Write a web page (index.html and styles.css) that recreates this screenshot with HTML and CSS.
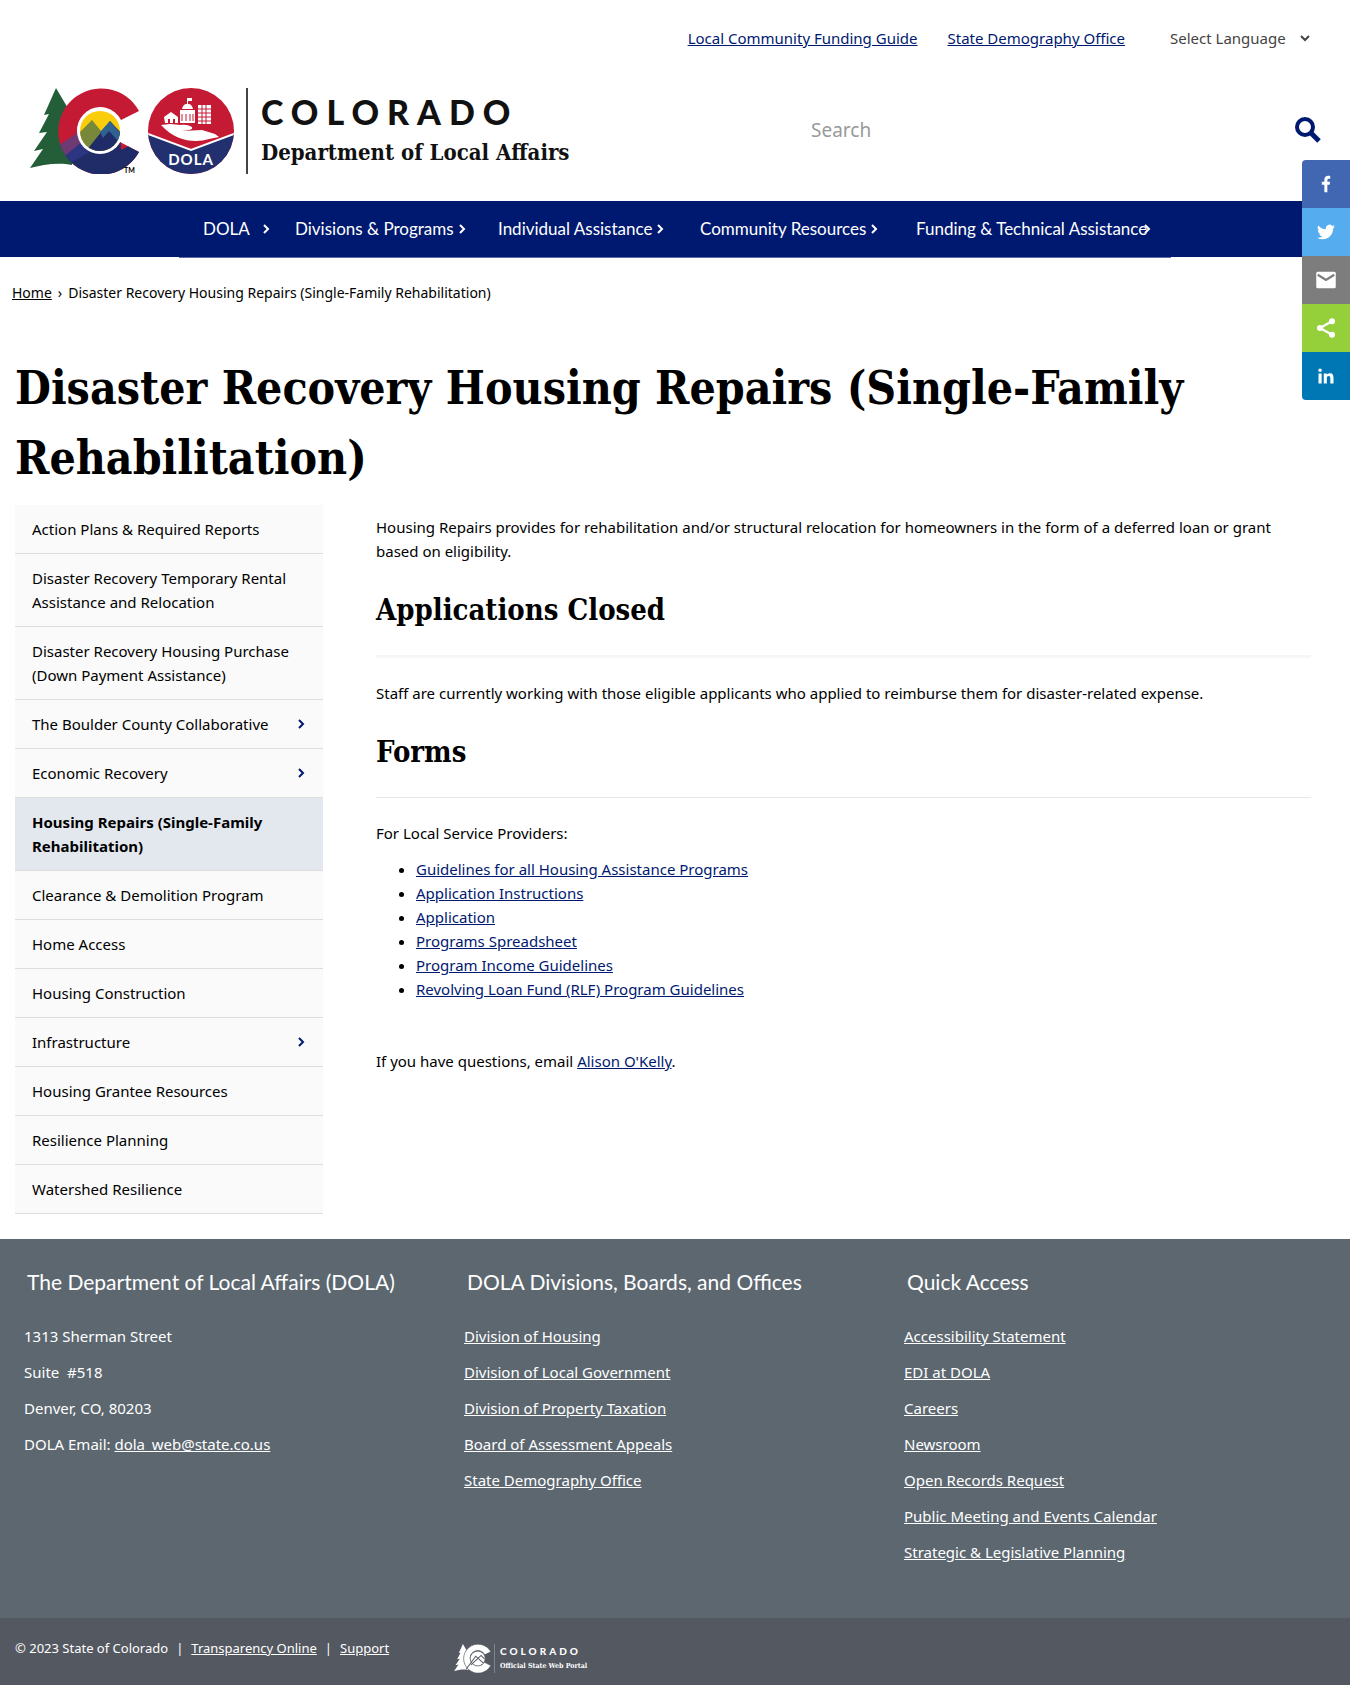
FILE: index.html
```html
<!DOCTYPE html>
<html lang="en">
<head>
<meta charset="utf-8">
<meta name="viewport" content="width=device-width, initial-scale=1">
<title>Disaster Recovery Housing Repairs (Single-Family Rehabilitation)</title>
<link rel="stylesheet" href="styles.css">
</head>
<body>
<svg class="sprite" aria-hidden="true">
  <symbol id="chevron" viewBox="0 0 8 12"><path d="M2 2l4 4-4 4" fill="none" stroke="currentColor" stroke-width="2"/></symbol>
</svg>

<header class="header">
  <div class="utility">
    <a href="#">Local Community Funding Guide</a>
    <a href="#">State Demography Office</a>
    <div class="language">
      <select aria-label="Select Language"><option>Select Language</option></select>
      <svg width="10" height="7" viewBox="0 0 10 7" aria-hidden="true"><path d="M1 1l4 4 4-4" fill="none" stroke="#444" stroke-width="2"/></svg>
    </div>
  </div>
  <div class="masthead">
    <a class="brand" href="#">
      <svg class="brand-mark" width="109" height="86" viewBox="0 0 109 86" aria-hidden="true">
        <path d="M26 0L39 22 35 21 46 45 42 77 C28 74 12 77 0 80L13 61 4 63 17 44 9 45 19 26 14 27Z" fill="#235e39"/>
        <defs>
          <clipPath id="c-shape"><path d="M109 23A43 43 0 1 0 109 64L90 54A23 23 0 1 1 91 32Z"/></clipPath>
          <clipPath id="c-core"><circle cx="70" cy="43" r="20"/></clipPath>
        </defs>
        <g clip-path="url(#c-shape)">
          <path d="M20 0h90v86H20z" fill="#c51a33"/>
          <path d="M20 64L55 40 90 44 91 62 110 52V90H20z" fill="#1f2c68"/>
          <path d="M22 62L50 43 56 54 32 70Z" fill="#6d3a74"/>
          <path d="M32 70L52 54 60 64 38 76Z" fill="#2b3580"/>
        </g>
        <circle cx="70" cy="43" r="23" fill="#fff"/>
        <g clip-path="url(#c-core)">
          <path d="M45 20h50v50H45z" fill="#f9cd0b"/>
          <path d="M44 50L62 32 80 54 60 70Z" fill="#77883b"/>
          <path d="M44 78L80 33 96 50V72Z" fill="#1f2c68"/>
          <path d="M70 44L80 33 92 47 88 53 79 43 73 50Z" fill="#2f6290"/>
        </g>
        <text class="trademark" x="94" y="85">TM</text>
      </svg>
      <svg class="brand-seal" width="86" height="86" viewBox="0 0 86 86" aria-hidden="true">
        <defs><clipPath id="seal"><circle cx="43" cy="43" r="43"/></clipPath></defs>
        <g clip-path="url(#seal)">
          <path d="M0 0h86v86H0z" fill="#c51a33"/>
          <path d="M0 46L43 62 86 46V86H0z" fill="#22306f"/>
          <path d="M0 46L43 62 86 46" fill="none" stroke="#fff" stroke-width="2"/>
        </g>
        <g fill="#fff">
          <path d="M13 37L22 36 33 37C43 36 48 41 41 42L34 43 54 42 67 46 71 49 61 51C48 55 28 54 13 37Z"/>
          <path d="M16 29L23 24 30 29V35H27V31H25V35H22V31H20V35H17z"/>
          <path d="M32 22h15v13H32zM34 21C35 14 44 14 45 21zM39 10h1v6h-1zM40 10h4v3h-4z"/>
          <path d="M50 17h13v19H50z"/>
        </g>
        <path d="M34 26v7M38 26v7M42 26v7M45 26v7M54 17v19M58 17v19M50 21h13M50 25h13M50 29h13M50 33h13" stroke="#c51a33" stroke-width="1"/>
        <text class="seal-text" x="43" y="77" text-anchor="middle">DOLA</text>
      </svg>
      <span class="brand-name">
        <span class="brand-state">COLORADO</span>
        <span class="brand-dept">Department of Local Affairs</span>
      </span>
    </a>
    <form class="search" role="search">
      <input type="search" placeholder="Search" aria-label="Search">
      <button type="button" aria-label="Submit search">
        <svg width="26" height="26" viewBox="0 0 26 26" aria-hidden="true"><circle cx="10" cy="10" r="8" fill="none" stroke="#001970" stroke-width="4"/><path d="M16 16l8 8" stroke="#001970" stroke-width="5"/></svg>
      </button>
    </form>
  </div>
</header>

<nav class="nav" aria-label="Main">
  <ul>
    <li><a href="#">DOLA</a><svg><use href="#chevron"/></svg></li>
    <li><a href="#">Divisions &amp; Programs</a><svg><use href="#chevron"/></svg></li>
    <li><a href="#">Individual Assistance</a><svg><use href="#chevron"/></svg></li>
    <li><a href="#">Community Resources</a><svg><use href="#chevron"/></svg></li>
    <li><a href="#">Funding &amp; Technical Assistance</a><svg><use href="#chevron"/></svg></li>
  </ul>
</nav>

<aside class="share" aria-label="Share">
  <a class="facebook" href="#" aria-label="Facebook"><svg viewBox="0 0 32 32"><path d="M17.8 27V17h3l.6-4h-3.600V11c0-1.200.6-2 2.100-2h1.700V5.300c-.8-.2-1.700-.3-2.600-.3-3.200 0-5.200 1.900-5.200 5.200V13h-3.400v4h3.400v10z" fill="#fff"/></svg></a>
  <a class="twitter" href="#" aria-label="Twitter"><svg viewBox="0 0 32 32"><path d="M28 8.600a9.900 9.900 0 0 1-2.800.8 4.900 4.900 0 0 0 2.200-2.700c-1 .6-2 1-3.100 1.200a4.900 4.900 0 0 0-8.400 4.500A14 14 0 0 1 5.700 7.200a4.900 4.900 0 0 0 1.500 6.600c-.8 0-1.600-.3-2.200-.6v.1a4.900 4.900 0 0 0 3.900 4.800 4.900 4.900 0 0 1-2.200.1 4.900 4.900 0 0 0 4.600 3.400A9.900 9.900 0 0 1 4 23.600a13.900 13.900 0 0 0 7.500 2.200c9.100 0 14-7.500 14-14v-.6A10 10 0 0 0 28 8.600z" fill="#fff"/></svg></a>
  <a class="email" href="#" aria-label="Email"><svg viewBox="0 0 32 32"><rect x="3" y="5" width="26" height="22" rx="2" fill="#fff"/><path d="M5 9l11 7 11-7" fill="none" stroke="#7d7d7d" stroke-width="3"/></svg></a>
  <a class="sharethis" href="#" aria-label="ShareThis"><svg viewBox="0 0 32 32"><path d="M24 7L8 16l16 9" fill="none" stroke="#fff" stroke-width="3"/><circle cx="24" cy="7" r="4" fill="#fff"/><circle cx="8" cy="16" r="4" fill="#fff"/><circle cx="24" cy="25" r="4" fill="#fff"/></svg></a>
  <a class="linkedin" href="#" aria-label="LinkedIn"><svg viewBox="0 0 32 32"><path d="M6 12.600h4.200V26H6zM8.100 6a2.400 2.400 0 1 1 0 4.800 2.400 2.400 0 0 1 0-4.800M13 12.600h4v1.800c.6-1 1.900-2.200 4-2.200 4.200 0 5 2.800 5 6.400V26h-4.200v-6.500c0-1.600 0-3.600-2.200-3.600s-2.500 1.700-2.500 3.500V26H13z" fill="#fff"/></svg></a>
</aside>

<main class="page">
  <div class="breadcrumb"><a href="#">Home</a><span>›</span><span>Disaster Recovery Housing Repairs (Single-Family Rehabilitation)</span></div>
  <h1>Disaster Recovery Housing Repairs (Single-Family Rehabilitation)</h1>
  <div class="columns">
    <nav class="side" aria-label="Section">
      <a href="#">Action Plans &amp; Required Reports</a>
      <a href="#">Disaster Recovery Temporary Rental Assistance and Relocation</a>
      <a href="#">Disaster Recovery Housing Purchase (Down Payment Assistance)</a>
      <a href="#">The Boulder County Collaborative<svg><use href="#chevron"/></svg></a>
      <a href="#">Economic Recovery<svg><use href="#chevron"/></svg></a>
      <a class="active" href="#">Housing Repairs (Single-Family Rehabilitation)</a>
      <a href="#">Clearance &amp; Demolition Program</a>
      <a href="#">Home Access</a>
      <a href="#">Housing Construction</a>
      <a href="#">Infrastructure<svg><use href="#chevron"/></svg></a>
      <a href="#">Housing Grantee Resources</a>
      <a href="#">Resilience Planning</a>
      <a href="#">Watershed Resilience</a>
    </nav>
    <article class="content">
      <p>Housing Repairs provides for rehabilitation and/or structural relocation for homeowners in the form of a deferred loan or grant based on eligibility.</p>
      <h2>Applications Closed</h2>
      <hr class="thick">
      <p>Staff are currently working with those eligible applicants who applied to reimburse them for disaster-related expense.</p>
      <h2>Forms</h2>
      <hr>
      <p>For Local Service Providers:</p>
      <ul>
        <li><a href="#">Guidelines for all Housing Assistance Programs</a></li>
        <li><a href="#">Application Instructions</a></li>
        <li><a href="#">Application</a></li>
        <li><a href="#">Programs Spreadsheet</a></li>
        <li><a href="#">Program Income Guidelines</a></li>
        <li><a href="#">Revolving Loan Fund (RLF) Program Guidelines</a></li>
      </ul>
      <p class="contact">If you have questions, email <a href="#">Alison O'Kelly</a>.</p>
    </article>
  </div>
</main>

<footer>
  <div class="footer-main">
    <section>
      <h3>The Department of Local Affairs (DOLA)</h3>
      <p>1313 Sherman Street</p>
      <p>Suite&nbsp; #518</p>
      <p>Denver, CO, 80203</p>
      <p>DOLA Email: <a href="#">dola_web@state.co.us</a></p>
    </section>
    <section>
      <h3>DOLA Divisions, Boards, and Offices</h3>
      <p><a href="#">Division of Housing</a></p>
      <p><a href="#">Division of Local Government</a></p>
      <p><a href="#">Division of Property Taxation</a></p>
      <p><a href="#">Board of Assessment Appeals</a></p>
      <p><a href="#">State Demography Office</a></p>
    </section>
    <section>
      <h3>Quick Access</h3>
      <p><a href="#">Accessibility Statement</a></p>
      <p><a href="#">EDI at DOLA</a></p>
      <p><a href="#">Careers</a></p>
      <p><a href="#">Newsroom</a></p>
      <p><a href="#">Open Records Request</a></p>
      <p><a href="#">Public Meeting and Events Calendar</a></p>
      <p><a href="#">Strategic &amp; Legislative Planning</a></p>
    </section>
  </div>
  <div class="footer-bar">
    <div class="legal"><span>© 2023 State of Colorado</span><span>|</span><a href="#">Transparency Online</a><span>|</span><a href="#">Support</a></div>
    <a class="portal" href="#">
      <svg width="37" height="29" viewBox="0 0 109 86" aria-hidden="true">
        <path d="M26 0L39 22 35 21 46 45 42 77 C28 74 12 77 0 80L13 61 4 63 17 44 9 45 19 26 14 27Z" fill="#fff"/>
        <path d="M109 23A43 43 0 1 0 109 64L90 54A23 23 0 1 1 91 32Z" fill="#fff" stroke="#545861" stroke-width="2"/>
        <circle cx="70" cy="43" r="21" fill="#fff"/>
        <path d="M36 74L64 36 86 56M50 62L80 34 90 44" fill="none" stroke="#545861" stroke-width="3"/>
      </svg>
      <span class="portal-text"><span class="portal-state">COLORADO</span><span class="portal-name">Official State Web Portal</span></span>
    </a>
  </div>
</footer>
</body>
</html>
```

FILE: styles.css
```css
* {
  box-sizing: border-box;
}

body {
  margin: 0;
  position: relative;
  background: #fff;
  color: #000;
  font: 15px/24px "Noto Sans", sans-serif;
}

.sprite {
  position: absolute;
  width: 0;
  height: 0;
}

a {
  color: #001970;
}

p,
h1,
h2,
h3,
ul {
  margin: 0;
  padding: 0;
}

/* Header */
.header {
  height: 201px;
}

.utility {
  display: flex;
  justify-content: flex-end;
  align-items: center;
  gap: 30px;
  padding: 26px 40px 0 0;
}

.language {
  display: flex;
  align-items: center;
  gap: 14px;
  margin-left: 15px;
}

.language select {
  appearance: none;
  padding: 0;
  border: 0;
  background: none;
  color: #444;
  font: inherit;
}

.masthead {
  display: flex;
  justify-content: space-between;
  padding: 38px 29px 0 30px;
}

.brand {
  display: flex;
  color: #111;
  text-decoration: none;
}

.brand-seal {
  margin-left: 9px;
}

.trademark {
  font: bold 7px Lato, sans-serif;
}

.seal-text {
  fill: #fff;
  font: bold 15px Lato, sans-serif;
  letter-spacing: 1px;
}

.brand-name {
  display: flex;
  flex-direction: column;
  margin-left: 12px;
  padding-left: 13px;
  border-left: 2px solid #444;
}

.brand-state {
  padding-top: 4px;
  font: 900 34px/40px Lato, sans-serif;
  letter-spacing: 8px;
}

.brand-dept {
  font: bold 22px/40px "DejaVu Serif Condensed", "DejaVu Serif", serif;
}

.search {
  display: flex;
  align-items: center;
  width: 510px;
  height: 84px;
}

.search input {
  flex: 1;
  min-width: 0;
  padding: 0;
  border: 0;
  background: none;
  font: 19px/28px "Noto Sans", sans-serif;
}

.search input::placeholder {
  color: #999;
}

.search button {
  display: flex;
  padding: 0;
  border: 0;
  background: none;
}

/* Main navigation */
.nav {
  height: 56px;
  background: #001970;
}

.nav ul {
  display: grid;
  grid-template-columns: 92px 203px 202px 216px 1fr;
  max-width: 992px;
  height: 57px;
  margin: 0 auto;
  padding-left: 24px;
  border-bottom: 1px solid #5c6aa5;
  list-style: none;
}

.nav li {
  display: flex;
  align-items: center;
  gap: 4px;
  color: #fff;
  white-space: nowrap;
}

.nav li:first-child {
  gap: 12px;
}

.nav li:last-child svg {
  margin-left: -8px;
}

.nav a {
  color: #fff;
  font: 17px/24px Lato, sans-serif;
  text-decoration: none;
}

.nav svg,
.side svg {
  flex: none;
  width: 8px;
  height: 12px;
}

/* Share buttons */
.share {
  position: absolute;
  top: 160px;
  right: 0;
  width: 48px;
  border-radius: 4px 0 0 4px;
  overflow: hidden;
}

.share a {
  display: flex;
  align-items: center;
  justify-content: center;
  height: 48px;
}

.share svg {
  width: 24px;
  height: 24px;
}

.facebook {
  background: #4267b2;
}

.twitter {
  background: #55acee;
}

.email {
  background: #7d7d7d;
}

.sharethis {
  background: #95d03a;
}

.linkedin {
  background: #0077b5;
}

/* Page */
.page {
  padding: 24px 39px 25px 15px;
}

.breadcrumb {
  display: flex;
  gap: 6px;
  margin-left: -3px;
  font-size: 14px;
}

.breadcrumb a {
  color: #000;
}

h1,
h2 {
  font-family: "DejaVu Serif Condensed", "DejaVu Serif", serif;
  font-weight: bold;
}

h1 {
  margin-top: 48px;
  padding-right: 60px;
  font-size: 46px;
  line-height: 70px;
}

.columns {
  display: flex;
  gap: 53px;
  margin-top: 12px;
}

.side {
  flex: none;
  width: 308px;
}

.side a {
  display: flex;
  align-items: center;
  justify-content: space-between;
  padding: 12px 18px 12px 17px;
  border-bottom: 1px solid #ddd;
  background: #fafafa;
  color: #000;
  text-decoration: none;
}

.side svg {
  color: #001970;
}

.side .active {
  background: #e3e8ef;
  font-weight: bold;
}

.content {
  flex: 1;
  padding-top: 10px;
}

h2 {
  margin: 26px 0 24px;
  font-size: 29px;
  line-height: 42px;
}

hr {
  margin: 0 0 23px;
  border: 0;
  border-top: 1px solid #e8e8e8;
}

.thick {
  border-top: 3px solid #f6f6f6;
}

.content ul {
  margin: 12px 0 48px;
  padding-left: 40px;
}

/* Footer */
.footer-main {
  display: grid;
  grid-template-columns: 440px 440px 1fr;
  padding: 27px 24px 42px;
  background: #5c6770;
  color: #fff;
}

footer a {
  color: #fff;
}

h3 {
  margin: 0 0 26px 3px;
  font: 21px/32px Lato, sans-serif;
}

.footer-main p {
  margin-bottom: 12px;
}

.footer-bar {
  display: flex;
  align-items: flex-start;
  padding: 18px 15px 12px;
  background: #545861;
  color: #fff;
  font-size: 13px;
}

.legal {
  display: flex;
  gap: 8px;
  width: 439px;
}

.portal {
  display: flex;
  gap: 3px;
  padding-top: 8px;
  text-decoration: none;
}

.portal-text {
  display: flex;
  flex-direction: column;
  padding-left: 5px;
  border-left: 1px solid #80848c;
}

.portal-state {
  font: 900 10px/15px Lato, sans-serif;
  letter-spacing: 3px;
}

.portal-name {
  font: bold 7px/14px "DejaVu Serif Condensed", "DejaVu Serif", serif;
}
```
